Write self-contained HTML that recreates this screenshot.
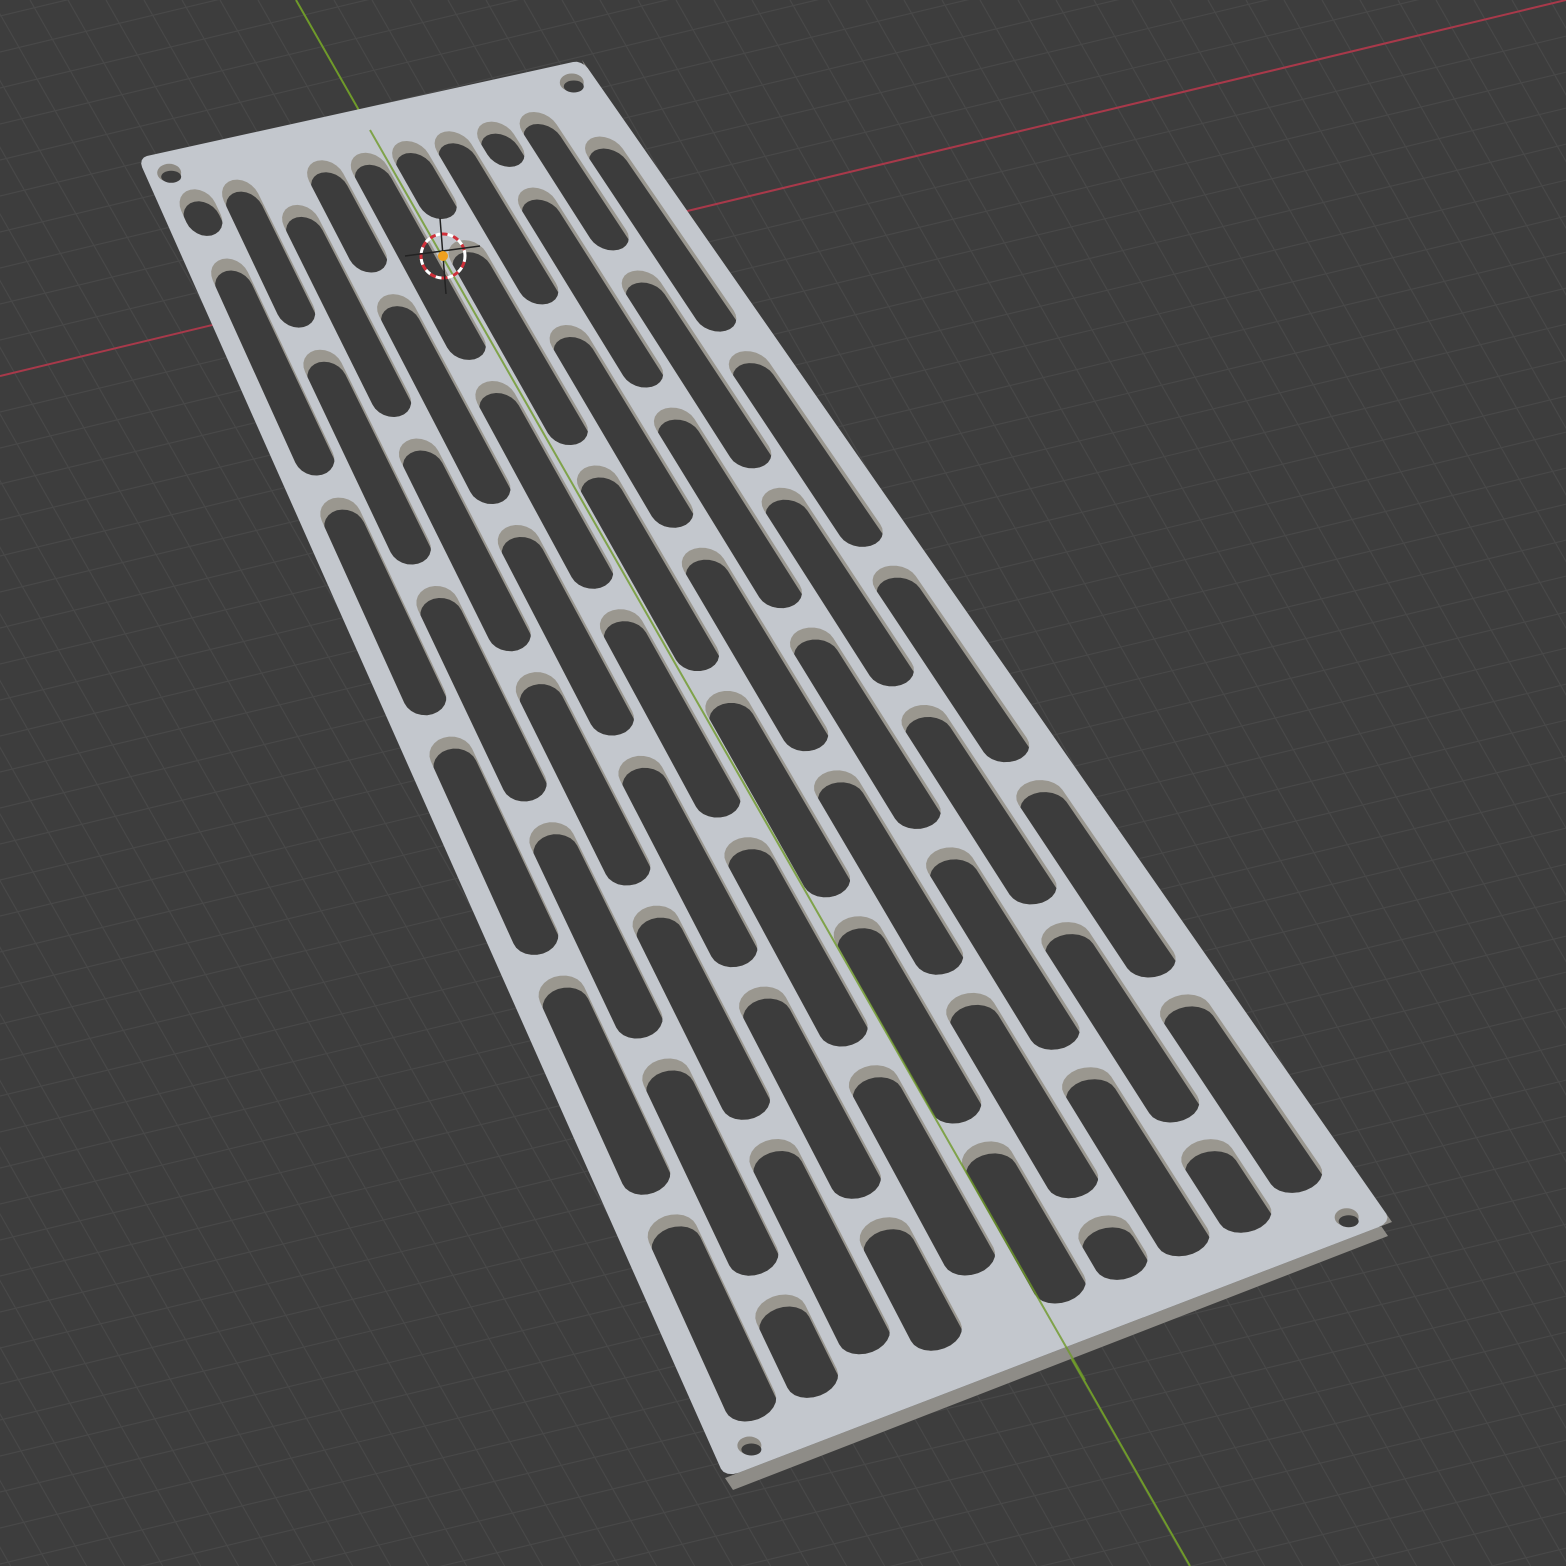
<!DOCTYPE html>
<html><head><meta charset="utf-8"><style>html,body{margin:0;padding:0;background:#3d3d3d;width:1566px;height:1566px;overflow:hidden}svg{display:block;overflow:hidden}</style></head>
<body>
<svg id="s" width="1566" height="1566" viewBox="0 0 1566 1566" xmlns="http://www.w3.org/2000/svg">
<rect width="1566" height="1566" fill="#3d3d3d"/>
<g id="grid" stroke="#484848" stroke-width="1.2"></g>
<line x1="0" y1="376" x2="1566" y2="0" stroke="#a8394a" stroke-width="2"/>
<line x1="296" y1="0" x2="1190" y2="1566" stroke="#6f9a2a" stroke-width="2"/>
<g id="plate"></g>
<g fill="none">
<circle cx="443" cy="256" r="22" stroke="#fff" stroke-width="3" stroke-dasharray="6 6"/>
<circle cx="443" cy="256" r="22" stroke="#d0303a" stroke-width="3" stroke-dasharray="6 6" stroke-dashoffset="6"/>
<line x1="405" y1="256" x2="480" y2="246" stroke="#222" stroke-width="1.5"/>
<line x1="440" y1="218" x2="446" y2="294" stroke="#222" stroke-width="1.5"/>
</g>
<circle cx="443" cy="256" r="5" fill="#f0a020"/>
</svg>
<script>
var NS="http://www.w3.org/2000/svg";
function el(t,a,p){var e=document.createElementNS(NS,t);for(var k in a)e.setAttribute(k,a[k]);p.appendChild(e);return e;}
var g=document.getElementById('grid');
for(var i=-40;i<60;i++){var x=296+i*38;el('line',{x1:x,y1:0,x2:x+1566*0.57,y2:1566},g);}
for(var i=-10;i<60;i++){var y=376+i*36;el('line',{x1:0,y1:y,x2:1566,y2:y-1566*0.24},g);}
var TL=[138,158],TR=[582,60],BL=[725,1478],BR=[1392,1222];
function P(u,v){return [TL[0]*(1-u)*(1-v)+TR[0]*u*(1-v)+BL[0]*(1-u)*v+BR[0]*u*v,TL[1]*(1-u)*(1-v)+TR[1]*u*(1-v)+BL[1]*(1-u)*v+BR[1]*u*v];}
function poly(pts,dx,dy){return pts.map(function(p){return (p[0]+(dx||0)).toFixed(1)+','+(p[1]+(dy||0)).toFixed(1)}).join(' ');}
var pl=document.getElementById('plate');
el('polygon',{points:poly([TR,BR,BL,[BL[0]+8,BL[1]+12],[BR[0]-4,BR[1]+14],[TR[0]+4,TR[1]+10]]),fill:'#8e8c87'},pl);
function rect(u0,u1,v0,v1,r,n){var pts=[];var cs=[[u1-r,v0+r*0.35,-90],[u1-r,v1-r*0.35,0],[u0+r,v1-r*0.35,90],[u0+r,v0+r*0.35,180]];
for(var c=0;c<4;c++){for(var k=0;k<=n;k++){var a=(cs[c][2]+90*k/n)*Math.PI/180;pts.push(P(cs[c][0]+r*Math.cos(a),cs[c][1]+r*0.35*Math.sin(a)));}}return pts;}
el('polygon',{points:poly(rect(0,1,0,1,0.02,4)),fill:'#c3c7cd'},pl);
var cols=10,m=0.03,w=(1-2*m)/cols,sw=w*0.8;
var cnt=0;
for(var i=0;i<cols;i++){
 var uc=m+w*(i+0.5);
 var L=0.165,G=0.018,off=((i*0.43)%1)*(L+G)-0.1;
 for(var v=off;v<1;v+=L+G){
  var v0=Math.max(v,0.03),v1=Math.min(v+L,0.97);
  if(v1-v0<0.03)continue;
  var pts=rect(uc-sw/2,uc+sw/2,v0,v1,sw/2,6);
  var id='c'+(cnt++);
  var cp=el('clipPath',{id:id},pl);el('polygon',{points:poly(pts)},cp);
  el('polygon',{points:poly(pts),fill:'#9a978f'},pl);
  el('polygon',{points:poly(pts,4,12),fill:'#3c3c3c','clip-path':'url(#'+id+')'},pl);
 }
}
[[0.05,0.015],[0.95,0.015],[0.05,0.985],[0.95,0.985]].forEach(function(h){var c=P(h[0],h[1]);el('ellipse',{cx:c[0],cy:c[1],rx:12,ry:9,fill:'#8e8b84'},pl);el('ellipse',{cx:c[0]+2,cy:c[1]+4,rx:10,ry:6,fill:'#3c3c3c'},pl);});
el('line',{x1:370,y1:130,x2:1085,y2:1380,stroke:'#6f9a2a','stroke-width':2,opacity:0.8},pl);
</script>
</body></html>
